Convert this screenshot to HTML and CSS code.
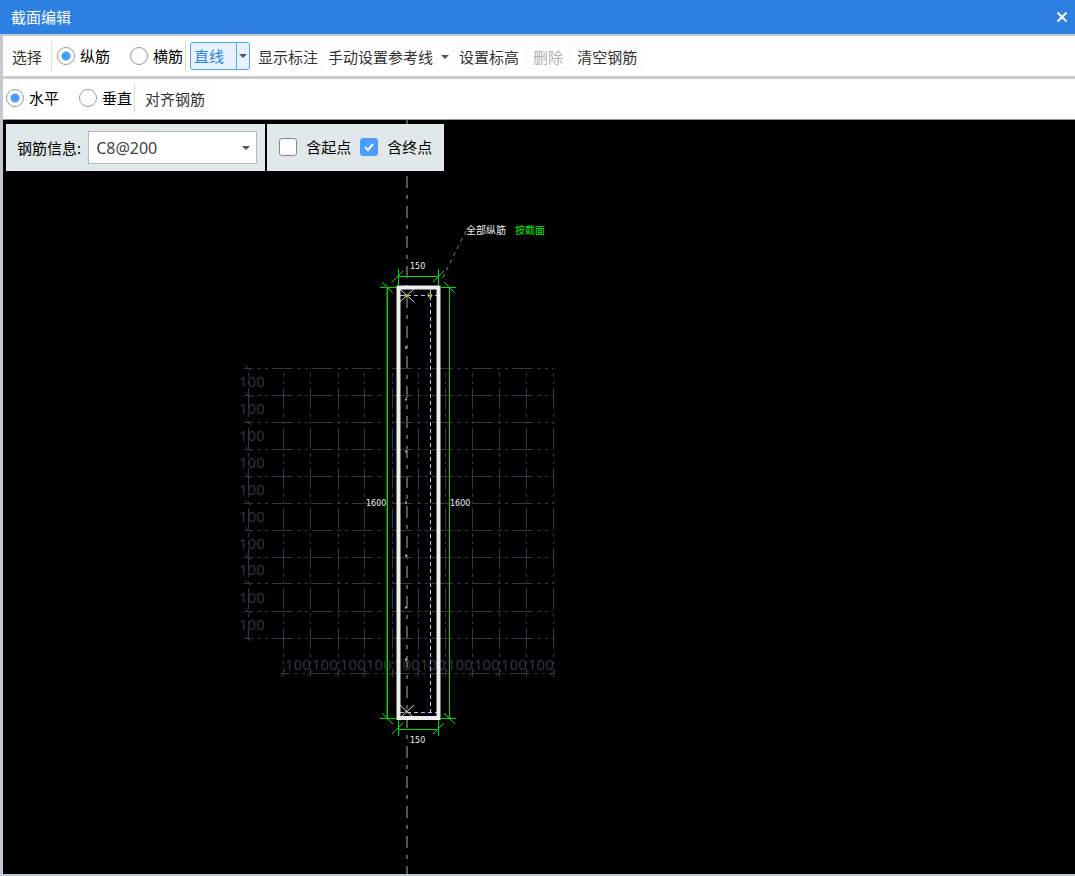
FILE: index.html
```html
<!DOCTYPE html>
<html lang="zh-CN">
<head>
<meta charset="utf-8">
<title>截面编辑</title>
<link rel="stylesheet" href="styles.css">
</head>
<body>
<header class="titlebar">
  <h1 class="title">截面编辑</h1>
  <button class="close" type="button" aria-label="关闭"><svg width="12" height="12" viewBox="0 0 12 12"><path d="M1.500 1.500 10.500 10.500M10.500 1.500 1.500 10.500"/></svg></button>
</header>
<main class="window">
  <div class="toolbar main-tools">
    <button class="tool" type="button">选择</button>
    <div class="radios">
      <label class="radio"><input type="radio" name="bar" checked>纵筋</label>
      <label class="radio"><input type="radio" name="bar">横筋</label>
    </div>
    <div class="split">
      <button class="split-main" type="button">直线</button>
      <button class="split-arrow" type="button" aria-label="更多"><span class="caret"></span></button>
    </div>
    <button class="tool" type="button">显示标注</button>
    <button class="tool menu" type="button">手动设置参考线<span class="caret"></span></button>
    <button class="tool" type="button">设置标高</button>
    <button class="tool" type="button" disabled>删除</button>
    <button class="tool" type="button">清空钢筋</button>
  </div>
  <div class="toolbar sub-tools">
    <div class="radios">
      <label class="radio"><input type="radio" name="dir" checked>水平</label>
      <label class="radio"><input type="radio" name="dir">垂直</label>
    </div>
    <button class="tool" type="button">对齐钢筋</button>
  </div>
  <section class="canvas">
    <svg class="drawing" id="drawing" role="img" aria-label="截面图">
      <g transform="translate(-3 -120)">
        <path class="axis" d="M407 120V874"/>
        <g id="grid" class="grid"></g>
        <path class="leader" d="M466 231 441 281"/>
        <path class="rebar" d="M400 295.500H438M430.500 289V718M400 712.500H438"/>
        <path class="outline" d="M398.500 287.500H438.500V718H398.500Z"/>
        <path class="dim" d="M380 287.500H397M440 287.500H456M380 718.500H397M440 718.500H456M387.500 287V719M449.500 287V719M398.500 269V286M438.500 269V286M398 276.500H439M398.500 720V736M438.500 720V736M398 729.500H439"/>
        <path class="dim left" d="M386.500 287V719"/>
        <path class="dim" d="M392 282 403 271M433 282 444 271M382 282 393 293M444 282 455 293M382 713 393 724M444 713 455 724M392 734 403 723M433 734 444 723"/>
        <path class="cross" d="M400 289 414 302M414 289 400 302M400 705 414 718M414 705 400 718"/>
        <circle class="point" cx="430" cy="295.500" r="2"/>
        <path class="dots" d="M404 295.500H408M405 347.500H407M405 399.500H407M405 451.500H407M405 502.500H407M405 555.500H407M405 607.500H407M405 659.500H407M405 711.500H408"/>
        <g class="label">
          <text x="410" y="269">150</text>
          <text x="410" y="743">150</text>
          <text x="366" y="506">1600</text>
          <text x="450" y="506">1600</text>
          <text class="note" x="466" y="234">全部纵筋</text>
          <text class="note green" x="515" y="234">按截面</text>
        </g>
      </g>
    </svg>
    <div class="panels">
      <div class="panel info">
        <label for="rebar">钢筋信息:</label>
        <span class="combo">
          <select id="rebar"><option>C8@200</option></select>
          <span class="caret"></span>
        </span>
      </div>
      <div class="panel ends">
        <label class="check"><input type="checkbox">含起点</label>
        <label class="check"><input type="checkbox" checked>含终点</label>
      </div>
    </div>
  </section>
</main>
<script src="grid.js"></script>
</body>
</html>
```
FILE: styles.css
```css
* { box-sizing: border-box; }
body {
  margin: 0;
  min-height: 100vh;
  display: flex;
  flex-direction: column;
  font: 15px/20px "Noto Sans CJK SC", sans-serif;
  color: #000;
}
button, select, input { font: inherit; margin: 0; }
button { background: none; border: 0; padding: 0; color: inherit; }
.titlebar {
  display: flex;
  align-items: center;
  justify-content: space-between;
  height: 34px;
  padding: 0 7px 1px 11px;
  background: #2d80e2;
  color: #fff;
}
.title { margin: 0; font-size: 15px; line-height: 20px; font-weight: 400; }
.close { display: flex; }
.close path { stroke: #fff; stroke-width: 2; fill: none; }
.window {
  flex: 1;
  display: flex;
  flex-direction: column;
  border: solid #c3c8d1;
  border-width: 2px 0 2px 3px;
}
.toolbar { display: flex; align-items: center; gap: 2px; background: #fff; }
.main-tools { height: 43px; padding: 0 3px 1px; border-bottom: 3px solid #c9cdd3; }
.sub-tools { height: 41px; padding: 0 3px 2px; border-bottom: 1px solid #999; }
.tool {
  height: 26px;
  padding: 2px 5px 0;
  border: 1px solid #f8f8f8;
  border-radius: 3px;
  color: #333;
  white-space: nowrap;
}
.tool:disabled { color: #b0b0b0; }
.menu { display: flex; align-items: center; gap: 8px; padding: 2px 1px 0; border-color: transparent; }
.caret {
  border: solid transparent;
  border-width: 4px 4px 0;
  border-top-color: #555;
}
.radios { display: flex; height: 30px; align-items: center; gap: 20px; border-right: 1px solid #dcdcdc; padding-right: 2px; }
.main-tools .radios { border-left: 1px solid #dcdcdc; margin: 0 2px 0 1px; padding-left: 5px; }
.sub-tools .radios { margin-right: 2px; }
.radio { display: flex; align-items: center; gap: 5px; white-space: nowrap; }
.radio input {
  appearance: none;
  width: 18px;
  height: 18px;
  border: 1px solid #999;
  border-radius: 50%;
}
.radio input:checked { background: radial-gradient(circle, #4a9cff 4px, #fff 5px); }
.split {
  display: flex;
  height: 28px;
  border: 1px solid #5ba4f4;
  border-radius: 3px;
  background: #e6f2ff;
  color: #2683ea;
}
.split-main { padding: 0 12px 0 3px; }
.split-arrow { display: flex; align-items: center; padding: 0 2px; border-left: 1px solid #5ba4f4; }
.canvas { position: relative; flex: 1; background: #000; overflow: hidden; padding: 4px 3px; }
.drawing { position: absolute; inset: 0; width: 100%; height: 100%; }
.panels { position: relative; display: flex; gap: 2px; }
.panel { display: flex; align-items: center; height: 47px; background: #e0e8ea; white-space: nowrap; }
.info { padding: 0 8px 0 11px; gap: 7px; }
.combo { display: grid; align-items: center; }
.combo > * { grid-area: 1 / 1; }
.combo select {
  appearance: none;
  width: 169px;
  height: 33px;
  padding: 0 7px;
  border: 1px solid #b8b8b8;
  border-radius: 0;
  background: #fff;
  color: #444;
  font: 16px "Noto Sans", sans-serif;
}
.combo .caret { justify-self: end; margin-right: 7px; pointer-events: none; }
.ends { padding: 0 12px 2px; gap: 9px; }
.check { display: flex; align-items: center; gap: 9px; }
.check input {
  appearance: none;
  width: 18px;
  height: 18px;
  border: 1px solid #888;
  border-radius: 3px;
  background: #fff;
}
.check input:checked {
  border-color: #4a9cff;
  background: #4a9cff url("data:image/svg+xml,%3Csvg xmlns='http://www.w3.org/2000/svg' viewBox='0 0 16 16'%3E%3Cpath d='M4 8l3 3 5-6' fill='none' stroke='white' stroke-width='2'/%3E%3C/svg%3E") center / 16px;
}
.drawing path, .drawing circle { fill: none; }
.axis { stroke: #555; stroke-width: 2; stroke-dasharray: 12 7 4 7; stroke-dashoffset: 4; }
.grid path { stroke: #303943; }
.grid .line { stroke-dasharray: 21 4 4 4 3 4; }
.grid .across { stroke-dashoffset: 12; }
.grid .down { stroke-dashoffset: 20; }
.grid text { fill: #2d353f; font: 15px "Noto Sans", sans-serif; }
.leader { stroke: #888; stroke-dasharray: 4 4; }
.rebar { stroke: #9cc4f0; stroke-dasharray: 4 3; }
.outline { stroke: #eee; stroke-width: 4; }
.dim { stroke: #00d800; }
.left { stroke: #006000; }
.cross { stroke: #ddd; }
.point { stroke: #e8c820; }
.dots { stroke: #c8b040; stroke-width: 2; }
.label text { fill: #eee; font: 8px "DejaVu Sans", sans-serif; }
.label .note { font: 10px "Noto Sans CJK SC", sans-serif; }
.label .green { fill: #0e0; }
```
FILE: grid.js
```js
const grid = document.getElementById("grid");
const xs = [283, 310, 338, 364, 392, 418, 445, 472, 499, 526, 553];
const ys = [368, 395, 422, 449, 476, 503, 530, 557, 583, 611, 638];
const line = (d, cls) => `<path class="${cls}" d="${d}"/>`;
const text = (x, y) => `<text x="${x}" y="${y}">100</text>`;
let out = line("M248.5 368V640", "line down") + line("M281 673.5H555", "line across");
ys.forEach((y, i) => {
  out += line(`M244 ${y + 0.5}H553`, "line across") + line(`M245 ${y - 3}L251 ${y + 3}`, "tick");
  if (i) out += text(239, y - 8);
});
xs.forEach((x, i) => {
  out += line(`M${x + 0.5} 368V677`, "line down") + line(`M${x - 3} 676L${x + 3} 670`, "tick");
  if (i) out += text(xs[i - 1] + 2, 670);
});
grid.innerHTML = out;
```
